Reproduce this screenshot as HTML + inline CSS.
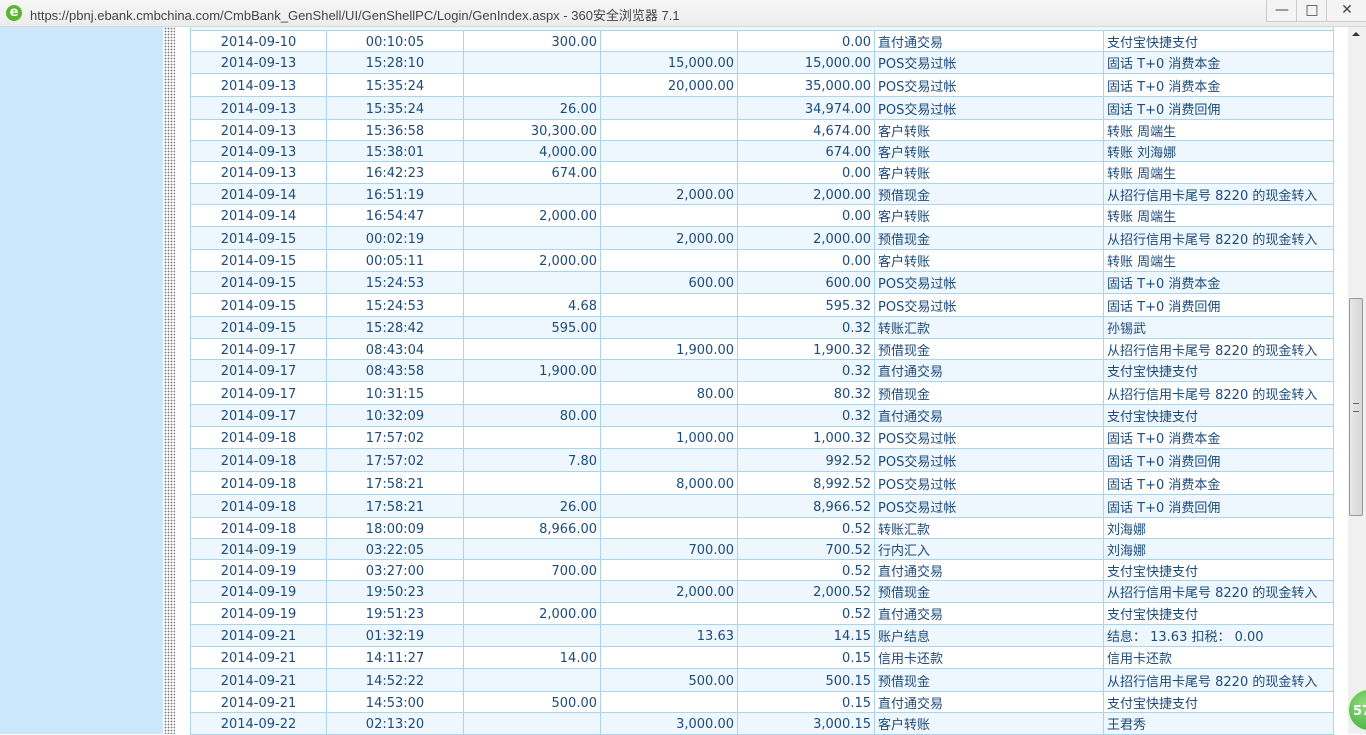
<!DOCTYPE html><html><head><meta charset="utf-8"><style>
body{margin:0;width:1366px;height:734px;overflow:hidden;background:#fff;font-family:"DejaVu Sans","Noto Sans CJK SC",sans-serif;position:relative}
#tb{position:absolute;left:0;top:0;width:1366px;height:26px;background:linear-gradient(#f7f7f7,#ececec);border-bottom:1px solid #d8d8d8}
#tb .t{position:absolute;left:30px;top:5px;font-size:13px;color:#444;font-family:"Liberation Sans","Noto Sans CJK SC",sans-serif}
#ic{position:absolute;left:6px;top:5px;width:16px;height:16px;border-radius:50%;background:#5cb531;color:#fff;font-size:13px;font-weight:bold;line-height:15px;text-align:center}
.wb{position:absolute;top:0;height:21px;width:30px;border-left:1px solid #ccc;border-bottom:1px solid #ccc;background:#f4f4f4;color:#444;font-size:14px;text-align:center;line-height:21px}
#lp{position:absolute;left:0;top:27px;width:163px;height:707px;background:#cbe7fb}
#dots{position:absolute;left:164px;top:27px;width:11px;height:707px;background-image:radial-gradient(#777 0.7px,transparent 1px);background-size:3px 3px}
.r{position:absolute;left:190px;width:1144px;display:flex;border-bottom:1px solid #a9d4ee;box-sizing:border-box;font-size:13px;color:#1c4b7c}
.r div{box-sizing:border-box;border-left:1px solid #a9d4ee;height:100%;display:flex;align-items:center;white-space:nowrap}
.r div:last-child{border-right:1px solid #a9d4ee}
.c1{width:136px;justify-content:center;padding-top:2px}.c2{width:137px;justify-content:center;padding-top:2px}
.c3,.c4,.c5{width:137px;justify-content:flex-end;padding-right:3px;padding-top:2px}
.c6{width:229px;padding-left:3px}.c7{width:231px;padding-left:3px}
.b{background:#eef7fd}
#sb{position:absolute;left:1348px;top:27px;width:18px;height:707px;background:#f0f0f0}
#th{position:absolute;left:1349px;top:298px;width:14px;height:218px;background:linear-gradient(90deg,#e8e8e8,#d6d6d6);border:1px solid #999;border-radius:2px;box-sizing:border-box}
</style></head><body>
<div id="tb"><div id="ic">e</div><div class="t">https://pbnj.ebank.cmbchina.com/CmbBank_GenShell/UI/GenShellPC/Login/GenIndex.aspx - 360安全浏览器 7.1</div>
<div class="wb" style="left:1266px">&#8212;</div><div class="wb" style="left:1296px">&#9633;</div><div class="wb" style="left:1326px;width:40px">&#10005;</div></div>
<div id="lp"></div><div id="dots"></div>
<div style="position:absolute;left:190px;top:27px;width:1144px;height:4px;background:#eef7fd;border-left:1px solid #a9d4ee;border-right:1px solid #a9d4ee;border-bottom:1px solid #a9d4ee;box-sizing:border-box"></div>
<div class="r" style="top:31px;height:21px"><div class="c1">2014-09-10</div><div class="c2">00:10:05</div><div class="c3">300.00</div><div class="c4"></div><div class="c5">0.00</div><div class="c6">直付通交易</div><div class="c7">支付宝快捷支付</div></div>
<div class="r b" style="top:52px;height:22px"><div class="c1">2014-09-13</div><div class="c2">15:28:10</div><div class="c3"></div><div class="c4">15,000.00</div><div class="c5">15,000.00</div><div class="c6">POS交易过帐</div><div class="c7">固话 T+0 消费本金</div></div>
<div class="r" style="top:74px;height:23px"><div class="c1">2014-09-13</div><div class="c2">15:35:24</div><div class="c3"></div><div class="c4">20,000.00</div><div class="c5">35,000.00</div><div class="c6">POS交易过帐</div><div class="c7">固话 T+0 消费本金</div></div>
<div class="r b" style="top:97px;height:23px"><div class="c1">2014-09-13</div><div class="c2">15:35:24</div><div class="c3">26.00</div><div class="c4"></div><div class="c5">34,974.00</div><div class="c6">POS交易过帐</div><div class="c7">固话 T+0 消费回佣</div></div>
<div class="r" style="top:120px;height:21px"><div class="c1">2014-09-13</div><div class="c2">15:36:58</div><div class="c3">30,300.00</div><div class="c4"></div><div class="c5">4,674.00</div><div class="c6">客户转账</div><div class="c7">转账 周端生</div></div>
<div class="r b" style="top:141px;height:21px"><div class="c1">2014-09-13</div><div class="c2">15:38:01</div><div class="c3">4,000.00</div><div class="c4"></div><div class="c5">674.00</div><div class="c6">客户转账</div><div class="c7">转账 刘海娜</div></div>
<div class="r" style="top:162px;height:22px"><div class="c1">2014-09-13</div><div class="c2">16:42:23</div><div class="c3">674.00</div><div class="c4"></div><div class="c5">0.00</div><div class="c6">客户转账</div><div class="c7">转账 周端生</div></div>
<div class="r b" style="top:184px;height:21px"><div class="c1">2014-09-14</div><div class="c2">16:51:19</div><div class="c3"></div><div class="c4">2,000.00</div><div class="c5">2,000.00</div><div class="c6">预借现金</div><div class="c7">从招行信用卡尾号 8220 的现金转入</div></div>
<div class="r" style="top:205px;height:22px"><div class="c1">2014-09-14</div><div class="c2">16:54:47</div><div class="c3">2,000.00</div><div class="c4"></div><div class="c5">0.00</div><div class="c6">客户转账</div><div class="c7">转账 周端生</div></div>
<div class="r b" style="top:227px;height:23px"><div class="c1">2014-09-15</div><div class="c2">00:02:19</div><div class="c3"></div><div class="c4">2,000.00</div><div class="c5">2,000.00</div><div class="c6">预借现金</div><div class="c7">从招行信用卡尾号 8220 的现金转入</div></div>
<div class="r" style="top:250px;height:22px"><div class="c1">2014-09-15</div><div class="c2">00:05:11</div><div class="c3">2,000.00</div><div class="c4"></div><div class="c5">0.00</div><div class="c6">客户转账</div><div class="c7">转账 周端生</div></div>
<div class="r b" style="top:272px;height:22px"><div class="c1">2014-09-15</div><div class="c2">15:24:53</div><div class="c3"></div><div class="c4">600.00</div><div class="c5">600.00</div><div class="c6">POS交易过帐</div><div class="c7">固话 T+0 消费本金</div></div>
<div class="r" style="top:294px;height:23px"><div class="c1">2014-09-15</div><div class="c2">15:24:53</div><div class="c3">4.68</div><div class="c4"></div><div class="c5">595.32</div><div class="c6">POS交易过帐</div><div class="c7">固话 T+0 消费回佣</div></div>
<div class="r b" style="top:317px;height:22px"><div class="c1">2014-09-15</div><div class="c2">15:28:42</div><div class="c3">595.00</div><div class="c4"></div><div class="c5">0.32</div><div class="c6">转账汇款</div><div class="c7">孙锡武</div></div>
<div class="r" style="top:339px;height:21px"><div class="c1">2014-09-17</div><div class="c2">08:43:04</div><div class="c3"></div><div class="c4">1,900.00</div><div class="c5">1,900.32</div><div class="c6">预借现金</div><div class="c7">从招行信用卡尾号 8220 的现金转入</div></div>
<div class="r b" style="top:360px;height:22px"><div class="c1">2014-09-17</div><div class="c2">08:43:58</div><div class="c3">1,900.00</div><div class="c4"></div><div class="c5">0.32</div><div class="c6">直付通交易</div><div class="c7">支付宝快捷支付</div></div>
<div class="r" style="top:382px;height:23px"><div class="c1">2014-09-17</div><div class="c2">10:31:15</div><div class="c3"></div><div class="c4">80.00</div><div class="c5">80.32</div><div class="c6">预借现金</div><div class="c7">从招行信用卡尾号 8220 的现金转入</div></div>
<div class="r b" style="top:405px;height:22px"><div class="c1">2014-09-17</div><div class="c2">10:32:09</div><div class="c3">80.00</div><div class="c4"></div><div class="c5">0.32</div><div class="c6">直付通交易</div><div class="c7">支付宝快捷支付</div></div>
<div class="r" style="top:427px;height:22px"><div class="c1">2014-09-18</div><div class="c2">17:57:02</div><div class="c3"></div><div class="c4">1,000.00</div><div class="c5">1,000.32</div><div class="c6">POS交易过帐</div><div class="c7">固话 T+0 消费本金</div></div>
<div class="r b" style="top:449px;height:23px"><div class="c1">2014-09-18</div><div class="c2">17:57:02</div><div class="c3">7.80</div><div class="c4"></div><div class="c5">992.52</div><div class="c6">POS交易过帐</div><div class="c7">固话 T+0 消费回佣</div></div>
<div class="r" style="top:472px;height:23px"><div class="c1">2014-09-18</div><div class="c2">17:58:21</div><div class="c3"></div><div class="c4">8,000.00</div><div class="c5">8,992.52</div><div class="c6">POS交易过帐</div><div class="c7">固话 T+0 消费本金</div></div>
<div class="r b" style="top:495px;height:23px"><div class="c1">2014-09-18</div><div class="c2">17:58:21</div><div class="c3">26.00</div><div class="c4"></div><div class="c5">8,966.52</div><div class="c6">POS交易过帐</div><div class="c7">固话 T+0 消费回佣</div></div>
<div class="r" style="top:518px;height:21px"><div class="c1">2014-09-18</div><div class="c2">18:00:09</div><div class="c3">8,966.00</div><div class="c4"></div><div class="c5">0.52</div><div class="c6">转账汇款</div><div class="c7">刘海娜</div></div>
<div class="r b" style="top:539px;height:21px"><div class="c1">2014-09-19</div><div class="c2">03:22:05</div><div class="c3"></div><div class="c4">700.00</div><div class="c5">700.52</div><div class="c6">行内汇入</div><div class="c7">刘海娜</div></div>
<div class="r" style="top:560px;height:21px"><div class="c1">2014-09-19</div><div class="c2">03:27:00</div><div class="c3">700.00</div><div class="c4"></div><div class="c5">0.52</div><div class="c6">直付通交易</div><div class="c7">支付宝快捷支付</div></div>
<div class="r b" style="top:581px;height:22px"><div class="c1">2014-09-19</div><div class="c2">19:50:23</div><div class="c3"></div><div class="c4">2,000.00</div><div class="c5">2,000.52</div><div class="c6">预借现金</div><div class="c7">从招行信用卡尾号 8220 的现金转入</div></div>
<div class="r" style="top:603px;height:22px"><div class="c1">2014-09-19</div><div class="c2">19:51:23</div><div class="c3">2,000.00</div><div class="c4"></div><div class="c5">0.52</div><div class="c6">直付通交易</div><div class="c7">支付宝快捷支付</div></div>
<div class="r b" style="top:625px;height:22px"><div class="c1">2014-09-21</div><div class="c2">01:32:19</div><div class="c3"></div><div class="c4">13.63</div><div class="c5">14.15</div><div class="c6">账户结息</div><div class="c7">结息： 13.63 扣税： 0.00</div></div>
<div class="r" style="top:647px;height:22px"><div class="c1">2014-09-21</div><div class="c2">14:11:27</div><div class="c3">14.00</div><div class="c4"></div><div class="c5">0.15</div><div class="c6">信用卡还款</div><div class="c7">信用卡还款</div></div>
<div class="r b" style="top:669px;height:23px"><div class="c1">2014-09-21</div><div class="c2">14:52:22</div><div class="c3"></div><div class="c4">500.00</div><div class="c5">500.15</div><div class="c6">预借现金</div><div class="c7">从招行信用卡尾号 8220 的现金转入</div></div>
<div class="r" style="top:692px;height:21px"><div class="c1">2014-09-21</div><div class="c2">14:53:00</div><div class="c3">500.00</div><div class="c4"></div><div class="c5">0.15</div><div class="c6">直付通交易</div><div class="c7">支付宝快捷支付</div></div>
<div class="r b" style="top:713px;height:22px"><div class="c1">2014-09-22</div><div class="c2">02:13:20</div><div class="c3"></div><div class="c4">3,000.00</div><div class="c5">3,000.15</div><div class="c6">客户转账</div><div class="c7">王君秀</div></div>
<div id="sb"><div style="position:absolute;left:4px;top:5px;width:0;height:0;border-left:4px solid transparent;border-right:4px solid transparent;border-bottom:4px solid #333"></div></div>
<div id="th"><div style="position:absolute;left:3px;top:104px;width:6px;height:7px;border-top:1px solid #666;border-bottom:1px solid #666"></div></div>
<div style="position:absolute;left:1347px;top:688px;width:44px;height:44px;border-radius:50%;background:radial-gradient(circle at 40% 35%,#8fdc7a,#3aa53a);border:2px solid #e6f5e0;color:#fff;font-size:13px;font-weight:bold;line-height:44px;padding-left:4px;box-sizing:border-box">57</div>
</body></html>
